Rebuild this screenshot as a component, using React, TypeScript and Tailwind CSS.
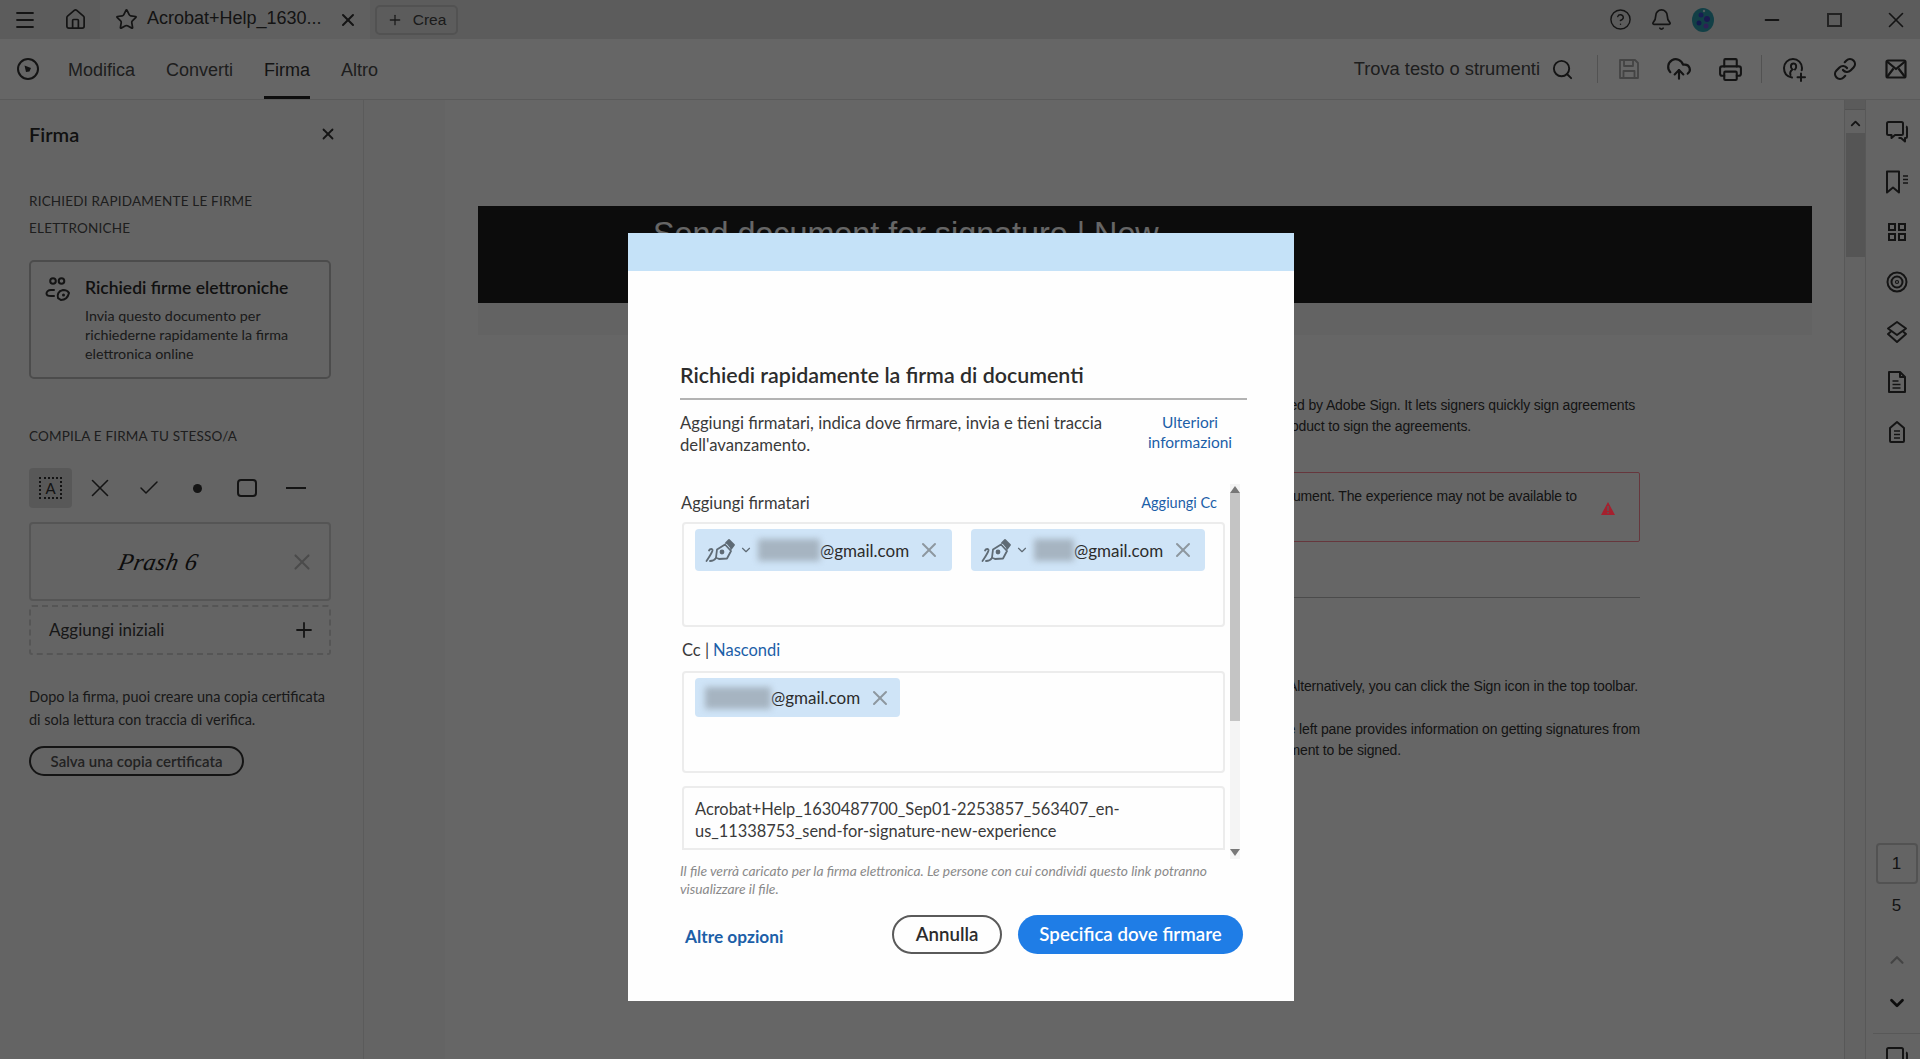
import { Menu, Home, Star, X, Plus, CircleHelp, Bell, Search, CloudUpload, Printer, Link, ChevronUp, ChevronDown, Check, Minus } from 'lucide-react'

const ADOBE = "[font-family:Lato,sans-serif]"

function CircleSign() {
  return (
    <svg width="24" height="24" viewBox="0 0 24 24" fill="none" stroke="currentColor" strokeWidth="2">
      <circle cx="12" cy="12" r="10" />
      <path d="M8.500 8.500l6.500 2.500-1.500 3.500-3.500.5z" fill="currentColor" stroke="none" />
    </svg>
  )
}

function SaveIcon() {
  return (
    <svg width="22" height="22" viewBox="0 0 22 22" fill="none" stroke="currentColor" strokeWidth="1.800" strokeLinejoin="round">
      <path d="M2 2h15l3 3v15H2z" />
      <path d="M6 2v6h9V2M5.500 20v-7h11v7" />
    </svg>
  )
}

function PersonAdd() {
  return (
    <svg width="26" height="26" viewBox="0 0 26 26" fill="none" stroke="currentColor" strokeWidth="2" strokeLinecap="round">
      <path d="M11 21.500c-5-.8-8-4.500-8-9.500a9 9 0 0 1 18 0c0 1-.1 1.500-.3 2.300" />
      <path d="M9.500 19c-1-3 .5-4.500 2-5.500-2.500-1.500-2-6 1-6s3.500 4 1.500 6" />
      <path d="M20 17.500v7.500M16.500 21.200h7.500" />
    </svg>
  )
}

function MailCross() {
  return (
    <svg width="22" height="20" viewBox="0 0 22 20" fill="none" stroke="currentColor" strokeWidth="2.200" strokeLinejoin="round">
      <rect x="1.500" y="1.500" width="19" height="17" rx="1.500" />
      <path d="M2 2.500L11 10l9-7.500M2 18l6.500-8.500M20 18l-6.500-8.500" />
    </svg>
  )
}

function Comments() {
  return (
    <svg width="24" height="24" viewBox="0 0 24 24" fill="none" stroke="currentColor" strokeWidth="2" strokeLinejoin="round">
      <path d="M3.500 2h13a1.500 1.500 0 0 1 1.500 1.500v10a1.500 1.500 0 0 1-1.500 1.500H10l-3.500 3v-3h-3A1.500 1.500 0 0 1 2 13.500v-10A1.500 1.500 0 0 1 3.500 2z" />
      <path d="M21 6.500c.7.200 1 .8 1 1.500v8.500c0 1-.6 1.500-1.500 1.500H20v3.500l-4-3.500h-2.500" />
    </svg>
  )
}

function BookmarkLines() {
  return (
    <svg width="24" height="24" viewBox="0 0 24 24" fill="none" stroke="currentColor" strokeWidth="2" strokeLinejoin="round">
      <path d="M2 1.500h12v21l-6-5-6 5z" />
      <path d="M18 6h5M18 9.500h5M18 13h5" strokeWidth="1.500" />
    </svg>
  )
}

function GridSquares() {
  return (
    <svg width="20" height="20" viewBox="0 0 20 20" fill="none" stroke="currentColor" strokeWidth="2">
      <rect x="2" y="2" width="6" height="6" />
      <rect x="12" y="2" width="6" height="6" />
      <rect x="2" y="12" width="6" height="6" />
      <rect x="12" y="12" width="6" height="6" />
    </svg>
  )
}

function Rings() {
  return (
    <svg width="22" height="22" viewBox="0 0 22 22" fill="none" stroke="currentColor" strokeWidth="2">
      <circle cx="11" cy="11" r="9.500" />
      <circle cx="11" cy="11" r="5.500" />
      <circle cx="11" cy="11" r="1.500" strokeWidth="1.200" />
    </svg>
  )
}

function StackedDiamonds() {
  return (
    <svg width="22" height="24" viewBox="0 0 22 24" fill="none" stroke="currentColor" strokeWidth="2" strokeLinejoin="round">
      <path d="M11 2l9 6.500-9 6.500-9-6.500z" />
      <path d="M5 11.500l-3 2.500 9 8 9-8-3-2.500" />
    </svg>
  )
}

function FileLines() {
  return (
    <svg width="20" height="24" viewBox="0 0 20 24" fill="none" stroke="currentColor" strokeWidth="2" strokeLinejoin="round">
      <path d="M2 2h11l5 5v15H2z" />
      <path d="M13 2v5h5" />
      <path d="M5.500 11h6M5.500 14.500h8M5.500 18h8" strokeWidth="1.500" />
    </svg>
  )
}

function TagFile() {
  return (
    <svg width="18" height="24" viewBox="0 0 18 24" fill="none" stroke="currentColor" strokeWidth="2" strokeLinejoin="round">
      <path d="M2 8l7-6 7 6v13a1 1 0 0 1-1 1H3a1 1 0 0 1-1-1z" />
      <path d="M6 11h6M6 14.500h6M6 18h6" strokeWidth="1.500" />
    </svg>
  )
}

function SignersIcon() {
  return (
    <svg width="26" height="26" viewBox="0 0 26 26" fill="none" stroke="currentColor" strokeWidth="2" strokeLinecap="round">
      <circle cx="8" cy="5" r="2.800" />
      <circle cx="16.500" cy="5" r="2.800" />
      <path d="M9 14H6c-3 0-4.500 2-4.500 3.500S3 20 6 20h3" />
      <path d="M13 22c-1-3 0-7 5-8 3 0 5 1 6 3-1 4-4 7-8 7z" />
      <circle cx="18.500" cy="19" r="1.500" fill="currentColor" stroke="none" />
    </svg>
  )
}

function PenChip() {
  return (
    <svg width="32" height="28" viewBox="0 0 32 28" fill="none" stroke="#5f6b75" strokeWidth="1.800" strokeLinecap="round" strokeLinejoin="round">
      <path d="M1.500 25c2-3 5.500-8 6-10.500.3-2-2.500-2-3.500 0M5 25c3 0 5-1.500 6-3" />
      <path d="M14 23l-3-1.500 1-8 8-5 6 6.500-4 7.500z" />
      <path d="M21 7l3-3 5 5-3 4" fill="#5f6b75" />
      <circle cx="17" cy="16" r="1.500" fill="#5f6b75" />
    </svg>
  )
}

function Avatar() {
  return (
    <svg width="22" height="24" viewBox="0 0 22 24">
      <ellipse cx="11" cy="12" rx="11" ry="12" fill="#2f9fae" />
      <circle cx="9" cy="7" r="2.500" fill="#3c4bd0" />
      <circle cx="15" cy="11" r="3" fill="#4140c8" />
      <circle cx="7" cy="15" r="2.500" fill="#3240c0" />
      <circle cx="14" cy="18" r="2.500" fill="#7050d8" />
      <circle cx="12" cy="3" r="1.200" fill="#c9e6ee" />
    </svg>
  )
}

function Chip({ blur, w, showPen = true }: { blur: number; w: number; showPen?: boolean }) {
  return (
    <div className="h-full bg-[#cfe4f7] rounded-[4px] flex items-center pl-[10px]" style={{ width: w }}>
      {showPen && <PenChip />}
      {showPen && <ChevronDown size={14} className="text-[#5f6b75] ml-[2px] mr-[5px] shrink-0" strokeWidth={2} />}
      <span className="h-[22px] bg-[#a6b4c1] blur-[3px] shrink-0" style={{ width: blur }} />
      <span className="text-[17px] text-[#2c2c2c] leading-none">@gmail.com</span>
      <X size={24} className="text-[#8d979f] ml-[8px] shrink-0" strokeWidth={2} />
    </div>
  )
}

function ToolGlyph({ children }: { children: React.ReactNode }) {
  return <div className="w-[49px] h-[40px] flex items-center justify-center text-[#333]">{children}</div>
}

function RailIcon({ children }: { children: React.ReactNode }) {
  return <div className="h-[50px] shrink-0 flex items-center justify-center text-[#333]">{children}</div>
}

export default function App() {
  return (
    <div className={`relative w-[1920px] h-[1059px] overflow-hidden bg-white flex flex-col ${ADOBE}`}>
      {/* Title bar */}
      <div className="h-[39px] bg-[#e6e6e6] flex items-center shrink-0 text-[#333] [font-family:'Liberation_Sans',sans-serif]">
        <div className="w-[50px] flex justify-center"><Menu size={24} strokeWidth={1.800} /></div>
        <div className="w-[50px] flex justify-center"><Home size={23} strokeWidth={1.800} /></div>
        <div className="w-[270px] h-full bg-[#f0f0f0] flex items-center pl-[15px]">
          <Star size={23} strokeWidth={1.800} />
          <span className="ml-[9px] -mt-[2px] text-[18px] w-[186px] whitespace-nowrap">Acrobat+Help_1630...</span>
          <X size={20} strokeWidth={2.400} className="ml-[5px]" />
        </div>
        <div className="ml-[5px] w-[83px] h-[30px] border-2 border-[#ccc] rounded-[5px] flex items-center justify-center gap-[10px] text-[15.500px] text-[#444]">
          <Plus size={16} strokeWidth={2} />
          <span>Crea</span>
        </div>
        <div className="ml-auto flex items-center">
          <CircleHelp size={23} strokeWidth={1.500} />
          <Bell size={23} strokeWidth={1.800} className="ml-[18px]" />
          <div className="ml-[19px]"><Avatar /></div>
          <Minus size={22} strokeWidth={2} className="ml-[47px]" />
          <span className="ml-[44px] w-[15px] h-[14px] border-2 border-[#555]" />
          <X size={26} strokeWidth={1.500} className="ml-[41px] mr-[11px]" />
        </div>
      </div>

      {/* Toolbar */}
      <div className="h-[61px] bg-white border-b border-[#e0e0e0] flex items-center shrink-0 text-[#333] [font-family:'Liberation_Sans',sans-serif]">
        <div className="ml-[16px] w-[24px]"><CircleSign /></div>
        <nav className="flex h-full items-center ml-[28px] text-[18px]">
          <span className="pt-[2px] text-[#4b4b4b]">Modifica</span>
          <span className="pt-[2px] ml-[31px] text-[#4b4b4b]">Converti</span>
          <span className="pt-[2px] ml-[31px] relative h-full flex items-center">
            Firma
            <span className="absolute left-0 right-0 bottom-0 h-[3px] bg-[#222]" />
          </span>
          <span className="pt-[2px] ml-[31px] text-[#4b4b4b]">Altro</span>
        </nav>
        <div className="ml-auto flex items-center">
          <span className="text-[18.300px] text-[#4b4b4b]">Trova testo o strumenti</span>
          <Search size={23} strokeWidth={2} className="ml-[11px]" />
          <span className="w-px h-[28px] bg-[#ccc] ml-[23px]" />
          <div className="ml-[20px] text-[#aaa]"><SaveIcon /></div>
          <CloudUpload size={26} strokeWidth={2} className="ml-[26px]" />
          <Printer size={25} strokeWidth={2} className="ml-[26px]" />
          <span className="w-px h-[28px] bg-[#ccc] ml-[18px]" />
          <div className="ml-[19px]"><PersonAdd /></div>
          <Link size={24} strokeWidth={2.200} className="ml-[26px]" />
          <div className="ml-[28px] mr-[13px]"><MailCross /></div>
        </div>
      </div>

      <div className="flex flex-1 min-h-0">
        {/* Left panel */}
        <aside className="w-[364px] shrink-0 bg-[#fafafa] border-r border-[#e4e4e4] pl-[29px] text-[#333]">
          <div className="mt-[20px] h-[28px] flex items-center justify-between pr-[26px]">
            <h2 className="text-[20px] font-semibold text-[#2c2c2c]">Firma</h2>
            <X size={18} strokeWidth={2.400} />
          </div>
          <div className="mt-[40px] text-[13.500px] leading-[27px] tracking-[0.2px] text-[#4b4b4b] w-[302px]">
            RICHIEDI RAPIDAMENTE LE FIRME ELETTRONICHE
          </div>
          <div className="mt-[18px] w-[302px] h-[119px] border-2 border-[#bdbdbd] rounded-[5px] pl-[14px] pt-[14px] flex">
            <div className="w-[40px] shrink-0"><SignersIcon /></div>
            <div>
              <div className="text-[17.500px] font-semibold leading-[24px] text-[#2c2c2c] whitespace-nowrap">Richiedi firme elettroniche</div>
              <div className="mt-[6px] text-[14.300px] leading-[19px] text-[#444] w-[215px]">
                Invia questo documento per richiederne rapidamente la firma elettronica online
              </div>
            </div>
          </div>
          <div className="mt-[44px] text-[13.500px] leading-[27px] tracking-[0.2px] text-[#4b4b4b]">COMPILA E FIRMA TU STESSO/A</div>
          <div className="mt-[18px] flex items-center">
            <div className="w-[43px] h-[40px] bg-[#dcdcdc] rounded-[4px] flex items-center justify-center mr-[3px]">
              <div className="w-[23px] h-[22px] border-2 border-dotted border-[#333] flex items-center justify-center text-[15px] leading-none text-[#333]">A</div>
            </div>
            <ToolGlyph><X size={30} strokeWidth={1.300} /></ToolGlyph>
            <ToolGlyph><Check size={24} strokeWidth={1.500} /></ToolGlyph>
            <ToolGlyph><span className="w-[9px] h-[9px] rounded-full bg-[#333]" /></ToolGlyph>
            <ToolGlyph><span className="w-[20px] h-[18px] border-2 border-[#333] rounded-[4px]" /></ToolGlyph>
            <ToolGlyph><span className="w-[20px] h-[2px] bg-[#333]" /></ToolGlyph>
          </div>
          <div className="mt-[14px] w-[302px] h-[79px] border-2 border-[#d4d4d4] rounded-[4px] flex items-center justify-between pl-[88px] pr-[14px]">
            <span className="[font-family:'Liberation_Serif',serif] italic text-[24px] text-[#222] -skew-x-12 tracking-[0.5px]">Prash 6</span>
            <X size={26} strokeWidth={2} className="text-[#bbb]" />
          </div>
          <div className="mt-[4px] w-[302px] h-[50px] border-2 border-dashed border-[#d4d4d4] rounded-[3px] flex items-center justify-between pl-[18px] pr-[13px]">
            <span className="text-[17px] text-[#3a3a3a]">Aggiungi iniziali</span>
            <Plus size={24} strokeWidth={1.800} />
          </div>
          <p className="mt-[30px] w-[306px] text-[14.500px] leading-[23px] text-[#3f3f3f]">
            Dopo la firma, puoi creare una copia certificata di sola lettura con traccia di verifica.
          </p>
          <div className="mt-[15px] w-[215px] h-[30px] border-2 border-[#333] rounded-full flex items-center justify-center text-[15px] font-semibold text-[#555]">
            Salva una copia certificata
          </div>
        </aside>

        <div className="w-[81px] shrink-0 bg-[#fafafa]" />

        {/* Page */}
        <main className="flex-1 min-w-0 bg-white pt-[106px] pl-[33px] pr-[32px] text-[#333] [font-family:'Liberation_Sans',sans-serif] text-[14px] leading-[21px] tracking-[-0.15px]">
          <div className="h-[97px] bg-[#202020] pl-[175px] pt-[8px] overflow-hidden">
            <span className="text-[32.300px] leading-[40px] tracking-normal text-white whitespace-nowrap">Send document for signature | New</span>
          </div>
          <div className="h-[32px] bg-[#f7f7f7]" />
          <div className="ml-[160px] mr-[172px]">
            <div className="mt-[60px] text-right whitespace-nowrap pr-[5px]">Send for signature is powered by Adobe Sign. It lets signers quickly sign agreements</div>
            <div className="text-right whitespace-nowrap pr-[169px]">from any device without a product to sign the agreements.</div>
            <div className="mt-[35px] h-[70px] border border-[#ff8a98] rounded-[2px] flex justify-end items-start pt-[13px] pr-[16px] relative">
              <span className="mr-[46px] whitespace-nowrap">the document. The experience may not be available to</span>
              <svg width="14" height="13" viewBox="0 0 14 13" className="absolute right-[24px] top-[29px] z-20">
                <path d="M7 0l7 13H0z" fill="#a5202e" />
                <path d="M6.300 4h1.400v5H6.300zM6.300 10h1.400v1.400H6.300z" fill="#5a5a5a" />
              </svg>
            </div>
            <div className="mt-[55px] h-px bg-[#bbb]" />
            <div className="mt-[78px] text-right whitespace-nowrap pr-[2px]">Open the file. Alternatively, you can click the Sign icon in the top toolbar.</div>
            <div className="mt-[22px] text-right whitespace-nowrap">The left pane provides information on getting signatures from</div>
            <div className="text-right whitespace-nowrap pr-[239px]">the document to be signed.</div>
          </div>
        </main>

        {/* Scrollbar */}
        <div className="w-[22px] shrink-0 bg-[#f7f7f7] border-x border-[#dcdcdc] flex flex-col items-center">
          <div className="h-[10px] w-full bg-[#e4e4e4] border-b border-[#ccc]" />
          <ChevronUp size={15} strokeWidth={3} className="mt-[6px] text-[#333]" />
          <div className="mt-[2px] w-[19px] h-[124px] bg-[#d4d4d4]" />
        </div>

        {/* Right rail */}
        <div className="w-[54px] shrink-0 bg-[#fafafa] flex flex-col items-center pt-[7px] overflow-hidden pl-[7px]">
          <RailIcon><Comments /></RailIcon>
          <RailIcon><BookmarkLines /></RailIcon>
          <RailIcon><GridSquares /></RailIcon>
          <RailIcon><Rings /></RailIcon>
          <RailIcon><StackedDiamonds /></RailIcon>
          <RailIcon><FileLines /></RailIcon>
          <RailIcon><TagFile /></RailIcon>
          <div className="mt-[386px] shrink-0 w-[42px] h-[41px] border-2 border-[#ccc] rounded-[4px] flex items-center justify-center text-[17px] text-[#333] [font-family:'Liberation_Sans',sans-serif]">1</div>
          <div className="h-[44px] shrink-0 flex items-center text-[17px] text-[#333] [font-family:'Liberation_Sans',sans-serif]">5</div>
          <ChevronUp size={22} strokeWidth={2.400} className="mt-[21px] shrink-0 text-[#aaa]" />
          <ChevronDown size={22} strokeWidth={3} className="mt-[21px] shrink-0 text-[#222]" />
          <div className="mt-[19px] w-full h-px shrink-0 bg-[#ddd]" />
          <div className="mt-[12px] shrink-0 text-[#333]"><Comments /></div>
        </div>
      </div>

      {/* Dim layer */}
      <div className="absolute inset-0 bg-black/60 z-10" />

      {/* Modal */}
      <div className="absolute left-[628px] top-[233px] w-[666px] h-[768px] bg-[#fefefe] z-20 flex flex-col text-[#2c2c2c]">
        <div className="h-[38px] bg-[#c5e2f8] shrink-0" />
        <div className="pl-[52px] pr-[47px]">
          <h1 className="mt-[89px] h-[30px] text-[21.400px] leading-[30px] font-semibold">Richiedi rapidamente la firma di documenti</h1>
          <div className="mt-[8px] h-[2px] bg-[#b3b3b3]" />
          <div className="mt-[12px] flex justify-between">
            <p className="w-[440px] text-[16.700px] leading-[22px] text-[#3a3a3a]">
              Aggiungi firmatari, indica dove firmare, invia e tieni traccia dell'avanzamento.
            </p>
            <a className="w-[114px] text-center text-[15.500px] leading-[20px] text-[#1c5fa8]">Ulteriori informazioni</a>
          </div>
          <div className="mt-[28px] h-[375px] flex overflow-hidden">
            <div className="w-[545px] shrink-0">
              <div className="h-[38px] flex items-center justify-between pl-px pr-[8px]">
                <span className="text-[16.500px] text-[#3a3a3a]">Aggiungi firmatari</span>
                <a className="text-[14.500px] text-[#1c5fa8]">Aggiungi Cc</a>
              </div>
              <div className="ml-[2px] h-[105px] border-2 border-[#ececec] rounded-[4px] pl-[11px] pt-[5px]">
                <div className="flex gap-[19px] h-[42px]">
                  <Chip blur={62} w={257} />
                  <Chip blur={40} w={234} />
                </div>
              </div>
              <div className="h-[44px] flex items-center pl-[2px] pt-[3px] text-[16.500px]">
                <span className="text-[#3a3a3a]">Cc | </span>
                <a className="ml-[4px] text-[#1c5fa8]">Nascondi</a>
              </div>
              <div className="ml-[2px] h-[102px] border-2 border-[#ececec] rounded-[4px] pl-[11px] pt-[5px]">
                <div className="h-[39px] flex">
                  <Chip blur={66} w={205} showPen={false} />
                </div>
              </div>
              <div className="mt-[13px] ml-[2px] h-[64px] border-2 border-[#ececec] rounded-t-[4px] pl-[11px] pt-[10px] text-[16.400px] leading-[22px] text-[#3a3a3a]">
                Acrobat+Help_1630487700_Sep01-2253857_563407_en-<br />us_11338753_send-for-signature-new-experience
              </div>
            </div>
            <div className="w-[10px] ml-[5px] shrink-0 flex flex-col items-center bg-[#f4f4f4]">
              <span className="w-0 h-0 mt-[2px] border-x-[5px] border-x-transparent border-b-[7px] border-b-[#777]" />
              <div className="w-full h-[228px] bg-[#c4c4c4]" />
              <span className="mt-auto mb-[3px] w-0 h-0 border-x-[5px] border-x-transparent border-t-[7px] border-t-[#777]" />
            </div>
          </div>
          <p className="mt-[3px] text-[13.800px] leading-[18px] italic text-[#8a8a8a] w-[545px]">
            Il file verrà caricato per la firma elettronica. Le persone con cui condividi questo link potranno visualizzare il file.
          </p>
          <div className="mt-[17px] h-[39px] flex items-center pl-[5px] pr-[4px]">
            <a className="mt-[4px] text-[17.300px] font-bold text-[#1c5fa8]">Altre opzioni</a>
            <div className="ml-auto w-[110px] h-[39px] border-2 border-[#5a5a5a] rounded-full flex items-center justify-center text-[18.700px] font-semibold">Annulla</div>
            <div className="ml-[16px] w-[225px] h-[39px] bg-[#1f7de6] rounded-full flex items-center justify-center text-[18.700px] font-semibold text-white">Specifica dove firmare</div>
          </div>
        </div>
      </div>
    </div>
  )
}
